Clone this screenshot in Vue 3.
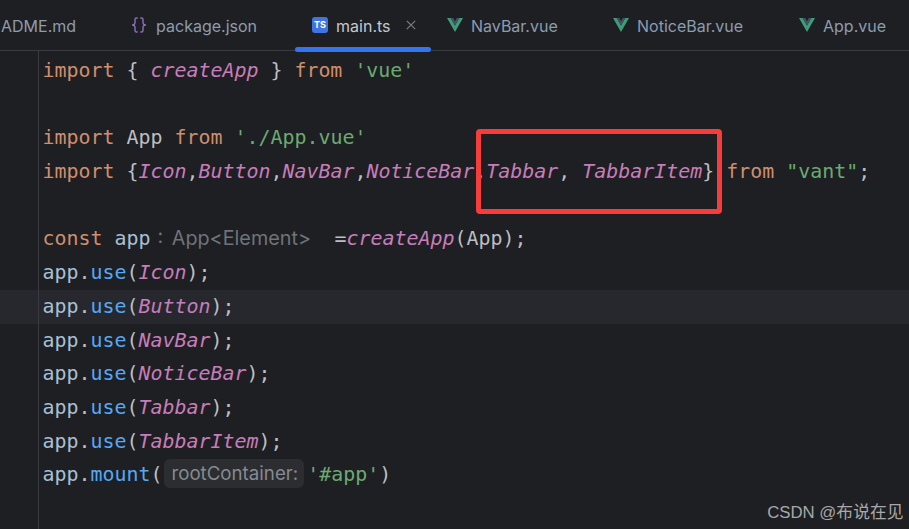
<script setup>
const kw = 'kw', fn = 'fn', tx = 'tx', st = 'st', me = 'me', va = 'va'
const lines = [
  [[kw,'import'],[tx,' { '],[fn,'createApp'],[tx,' } '],[kw,'from'],[tx,' '],[st,"'vue'"]],
  [],
  [[kw,'import'],[tx,' App '],[kw,'from'],[tx,' '],[st,"'./App.vue'"]],
  [[kw,'import'],[tx,' {'],[fn,'Icon'],[tx,','],[fn,'Button'],[tx,','],[fn,'NavBar'],[tx,','],[fn,'NoticeBar'],[tx,','],[fn,'Tabbar'],[tx,', '],[fn,'TabbarItem'],[tx,'} '],[kw,'from'],[tx,' '],[st,'"vant"'],[tx,';']],
  [],
  [[kw,'const'],[tx,' '],[va,'app'],['hint',': App<Element>'],[tx,'='],[fn,'createApp'],[tx,'(App);']],
  useLine('Icon'),
  { current: true, tokens: useLine('Button') },
  ...['NavBar','NoticeBar','Tabbar','TabbarItem'].map(useLine),
  [[va,'app'],[tx,'.'],[me,'mount'],[tx,'('],['pill','rootContainer:'],[st,"'#app'"],[tx,')']],
]
function useLine(name) {
  return [[va,'app'],[tx,'.'],[me,'use'],[tx,'('],[fn,name],[tx,');']]
}
const rows = lines.map(l => Array.isArray(l) ? { current: false, tokens: l } : l)
</script>

<template>
  <div class="ide">
    <header class="tabs">
      <div class="tab t-readme"><span class="name">ADME.md</span></div>
      <div class="tab t-pkg">
        <svg class="ico" viewBox="0 0 16 16" fill="none" stroke="#8f6fbd" stroke-width="1.4" stroke-linecap="round" stroke-linejoin="round">
          <path d="M6.200 1H5.600C4.500 1 4 1.500 4 2.600V6c0 .9-.5 1.600-2.400 2C3.500 8.400 4 9.100 4 10v3.400c0 1.100.5 1.600 1.600 1.600h.6" />
          <path d="M9.800 1h.6c1.100 0 1.600.5 1.600 1.600V6c0 .9.5 1.600 2.400 2-1.900.4-2.400 1.100-2.400 2v3.400c0 1.100-.5 1.600-1.600 1.600h-.6" />
        </svg>
        <span class="name">package.json</span>
      </div>
      <div class="tab t-main">
        <span class="ts">TS</span>
        <span class="name active">main.ts</span>
        <svg class="close" viewBox="0 0 10 10" stroke="#7a7e85" stroke-width="1.200" fill="none"><path d="M.8.8l8.400 8.400M9.200.8L.8 9.200" /></svg>
        <i class="underline"></i>
      </div>
      <div class="tab t-nav">
        <svg class="ico" viewBox="0 0 16 16"><path d="M0 1h3.700L8 8.500 12.300 1H16L8 15z" fill="#3f9b78" /><path d="M3.700 1h2.500L8 4.200 9.800 1h2.500L8 8.500z" fill="#3f5566" /></svg>
        <span class="name">NavBar.vue</span>
      </div>
      <div class="tab t-notice">
        <svg class="ico" viewBox="0 0 16 16"><path d="M0 1h3.700L8 8.500 12.300 1H16L8 15z" fill="#3f9b78" /><path d="M3.700 1h2.500L8 4.200 9.800 1h2.500L8 8.500z" fill="#3f5566" /></svg>
        <span class="name">NoticeBar.vue</span>
      </div>
      <div class="tab t-app">
        <svg class="ico" viewBox="0 0 16 16"><path d="M0 1h3.700L8 8.500 12.300 1H16L8 15z" fill="#3f9b78" /><path d="M3.700 1h2.500L8 4.200 9.800 1h2.500L8 8.500z" fill="#3f5566" /></svg>
        <span class="name">App.vue</span>
      </div>
    </header>

    <main class="editor">
      <div v-for="(row, i) in rows" :key="i" class="line" :class="{ current: row.current }">
        <div class="gutter"></div>
        <div class="code"><span v-for="(t, j) in row.tokens" :key="j" :class="t[0]">{{ t[1] }}</span></div>
      </div>
      <div class="mark"></div>
    </main>
    <div class="watermark">CSDN @布说在见</div>
  </div>
</template>

<style>
html, body { margin: 0; background: #1e1f22; }
</style>

<style scoped>
.ide {
  position: relative;
  width: 909px;
  height: 529px;
  overflow: hidden;
  background: #1e1f22;
  display: flex;
  flex-direction: column;
}
.tabs {
  height: 51px;
  flex: none;
  box-sizing: border-box;
  border-bottom: 1px solid #393b40;
  display: flex;
  align-items: center;
  position: relative;
  padding-left: 1px;
  font: 16px Inter, "Noto Sans", sans-serif;
  color: #8c9cb0;
}
.tab { display: flex; align-items: center; position: relative; height: 100%; white-space: nowrap; }
.name { line-height: 1; position: relative; top: 1px; }
.name.active { color: #c4c8ce; }
.ico { width: 16px; height: 16px; flex: none; margin-right: 8px; }
.t-pkg { margin-left: 55px; }
.t-pkg .ico { margin-right: 9px; }
.t-main { margin-left: 55px; }
.t-nav { position: absolute; left: 447px; }
.t-notice { position: absolute; left: 613px; }
.t-app { position: absolute; left: 799px; }
.ts {
  width: 16px; height: 16px; border-radius: 3px; background: #3f74e3; color: #fff;
  font: bold 9px/16px Inter, sans-serif; text-align: center; margin-right: 8px; flex: none;
}
.close { width: 10px; height: 10px; margin-left: 15px; }
.underline {
  position: absolute; left: -17px; right: -15px; bottom: -2px; height: 5px;
  background: #3574f0; border-radius: 3px; z-index: 2;
}
.editor { flex: 1; position: relative; padding-top: 3px; }
.editor::before { content: ""; position: absolute; left: 38px; top: 0; bottom: 0; width: 1px; background: #393b40; z-index: 1; }
.line { display: flex; height: 33.7px; }
.line.current { background: #26282e; }
.gutter { width: 42.500px; flex: none; }
.code {
  font: 19.930px/33.7px "DejaVu Sans Mono", "Liberation Mono", monospace;
  white-space: pre;
  color: #bcbec4;
}
.kw { color: #cf8e6d; }
.tx { color: #bcbec4; }
.va { color: #a9c0d4; }
.fn { color: #c77dbb; font-style: italic; }
.st { color: #6aab73; }
.me { color: #56a8f5; }
.hint {
  font: 19.800px Inter, "Noto Sans", sans-serif;
  word-spacing: 3px;
  color: #6f737a;
  display: inline-block;
  width: 177px;
  padding-left: 7px;
}
.pill {
  font: 18.700px/1 Inter, "Noto Sans", sans-serif;
  color: #868a91;
  background: #2b2d30;
  border-radius: 6px;
  padding: 3px 6px 3px 7px;
  margin: 0 3px 0 2px;
  position: relative;
  top: -1px;
}
.mark {
  position: absolute;
  left: 476px; top: 78px;
  width: 246px; height: 85px;
  box-sizing: border-box;
  border: 5px solid #f83c3c;
  border-radius: 4px;
}
.watermark {
  position: absolute;
  right: 5.500px; bottom: 5px;
  font: 16.800px/22px "Liberation Sans", "Noto Sans CJK SC", sans-serif;
  color: #a8a8a8;
}
</style>
